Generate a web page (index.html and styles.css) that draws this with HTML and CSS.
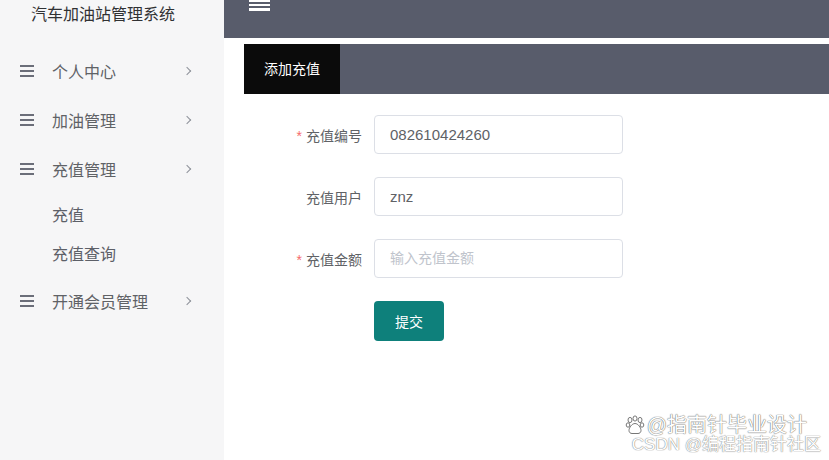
FILE: index.html
```html
<!DOCTYPE html>
<html lang="zh">
<head>
<meta charset="utf-8">
<title>汽车加油站管理系统</title>
<link rel="stylesheet" href="styles.css">
</head>
<body>
<div class="app">
  <aside class="sidebar">
    <div class="brand">汽车加油站管理系统</div>
    <ul class="menu">
      <li class="menu-item">
        <span class="bars"><i></i><i></i><i></i></span>
        <span class="menu-label">个人中心</span>
        <span class="chev"></span>
      </li>
      <li class="menu-item">
        <span class="bars"><i></i><i></i><i></i></span>
        <span class="menu-label">加油管理</span>
        <span class="chev"></span>
      </li>
      <li class="menu-item">
        <span class="bars"><i></i><i></i><i></i></span>
        <span class="menu-label">充值管理</span>
        <span class="chev"></span>
      </li>
      <li class="submenu">
        <div class="sub-item">充值</div>
        <div class="sub-item">充值查询</div>
      </li>
      <li class="menu-item">
        <span class="bars"><i></i><i></i><i></i></span>
        <span class="menu-label">开通会员管理</span>
        <span class="chev"></span>
      </li>
    </ul>
  </aside>
  <main class="main">
    <header class="topbar">
      <span class="hamburger"><i></i><i></i><i></i></span>
    </header>
    <section class="content">
      <nav class="tabs">
        <div class="tab active">添加充值</div>
      </nav>
      <form class="form">
        <div class="row">
          <label class="label"><span class="req">*</span>充值编号</label>
          <div class="input">082610424260</div>
        </div>
        <div class="row">
          <label class="label">充值用户</label>
          <div class="input">znz</div>
        </div>
        <div class="row">
          <label class="label"><span class="req">*</span>充值金额</label>
          <div class="input placeholder">输入充值金额</div>
        </div>
        <div class="row">
          <span class="label"></span>
          <button type="button" class="btn">提交</button>
        </div>
      </form>
    </section>
    <div class="watermark">
      <div class="wm1"><svg class="paw" width="20" height="20" viewBox="0 0 20 20"><g fill="#fff" stroke="#777" stroke-width="1"><ellipse cx="5" cy="5" rx="2" ry="2.6"/><ellipse cx="10" cy="3.5" rx="2" ry="2.6"/><ellipse cx="15" cy="5" rx="2" ry="2.6"/><ellipse cx="3" cy="10" rx="1.8" ry="2.2"/><ellipse cx="17" cy="10" rx="1.8" ry="2.2"/><path d="M10 8.5c-3 0-6 4-6 7 0 2 1.5 3 3 3h6c1.5 0 3-1 3-3 0-3-3-7-6-7z"/></g></svg>@指南针毕业设计</div>
      <div class="wm2">CSDN @编程指南针社区</div>
    </div>
  </main>
</div>
</body>
</html>
```
FILE: styles.css
```css
* { box-sizing: border-box; }
html, body { margin: 0; padding: 0; }
body {
  width: 829px;
  height: 460px;
  overflow: hidden;
  background: #fff;
  font-family: "Liberation Sans", "Noto Sans CJK SC", sans-serif;
  color: #606266;
}
.app { display: flex; height: 460px; }

.sidebar {
  width: 224px;
  flex: none;
  background: #f6f6f7;
  height: 100%;
}
.brand {
  height: 30px;
  line-height: 30px;
  padding-left: 31px;
  font-size: 16px;
  color: #303133;
}
.menu { list-style: none; margin: 16px 0 0; padding: 0; }
.menu-item {
  height: 49px;
  display: flex;
  align-items: center;
  padding-left: 20px;
  font-size: 16px;
  color: #606266;
}
.bars { width: 14px; display: flex; flex-direction: column; gap: 3px; margin-right: 18px; }
.bars i { display: block; height: 2px; background: #6b6e79; }
.menu-label { flex: 1; }
.chev {
  width: 6px; height: 6px;
  border-right: 1.2px solid #8d9099;
  border-top: 1.2px solid #8d9099;
  transform: rotate(45deg);
  margin-right: 34px;
}
.submenu { padding: 3px 0 2px; }
.sub-item {
  height: 39px;
  line-height: 39px;
  padding-left: 52px;
  font-size: 16px;
  color: #5d6068;
}

.main { flex: 1; position: relative; display: flex; flex-direction: column; }
.topbar {
  height: 38px;
  background: #585c6b;
  padding-left: 25px;
  flex: none;
}
.hamburger { display: flex; flex-direction: column; gap: 2px; width: 21px; margin-top: -1px; }
.hamburger i { display: block; height: 2.5px; background: #fff; }
.content { padding: 6px 0 0 20px; }
.tabs { height: 50px; background: #585c6b; display: flex; }
.tab {
  width: 96px;
  line-height: 50px;
  text-align: center;
  color: #fff;
  font-size: 14px;
}
.tab.active { background: #0b0b0b; }

.form { padding-top: 21px; display: flex; flex-direction: column; gap: 23px; }
.row { display: flex; align-items: center; height: 39px; }
.label {
  width: 130px;
  text-align: right;
  padding-right: 12px;
  font-size: 14px;
  color: #606266;
}
.req { color: #f56c6c; margin-right: 4px; }
.input {
  width: 249px;
  height: 39px;
  border: 1px solid #dcdfe6;
  border-radius: 4px;
  padding-left: 15px;
  line-height: 37px;
  font-size: 15px;
  color: #606266;
}
.input.placeholder { color: #c0c4cc; font-size: 14px; }
.btn {
  width: 70px;
  height: 40px;
  margin-top: 1px;
  border: none;
  border-radius: 4px;
  background: #0e807b;
  color: #fff;
  font-size: 14px;
  font-family: inherit;
}

.watermark {
  position: absolute;
  right: 8px;
  bottom: 6px;
  color: #fff;
  text-shadow: 0 0 1px #666, 0 0 1px #666;
  text-align: right;
}
.wm1 { font-size: 20px; line-height: 22px; margin-right: 14px; display: flex; align-items: center; gap: 2px; }
.paw { flex: none; }
.wm2 { font-size: 17px; line-height: 18px; margin-top: 0; opacity: 0.8; }
```
